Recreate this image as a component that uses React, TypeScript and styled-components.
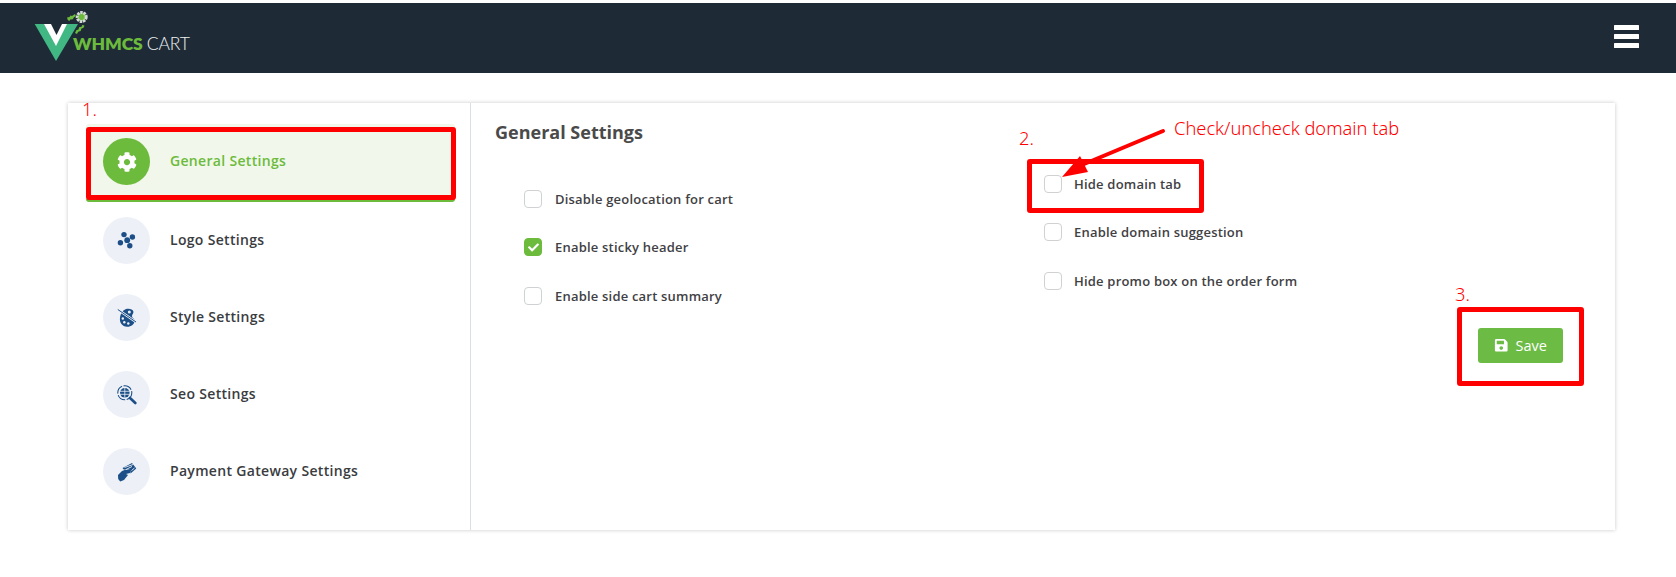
import React from "react";
import styled, { createGlobalStyle } from "styled-components";
import { FaCog, FaSave, FaCheck } from "react-icons/fa";

const Global = createGlobalStyle`
  html, body { margin: 0; padding: 0; background: #fff; }
  body { font-family: "Open Sans", "Liberation Sans", sans-serif; }
`;

const Page = styled.div`
  position: relative;
  width: 1676px;
  height: 577px;
  padding-top: 3px;
  box-sizing: border-box;
  overflow: hidden;
`;

const Header = styled.header`
  height: 70px;
  background: #1e2b37;
  display: flex;
  align-items: center;
  justify-content: space-between;
  padding: 0 37px 0 34px;
`;

const Brand = styled.div`
  display: flex;
  align-items: flex-end;
  height: 70px;
`;

const BrandMark = styled.svg`
  width: 62px;
  height: 60px;
  margin: 6px 0 0 0;
  align-self: flex-start;
  flex: none;
`;

const BrandText = styled.div`
  margin: 0 0 19px -23px;
  font-family: "Lato", sans-serif;
  font-size: 17.5px;
  line-height: 20px;
  white-space: nowrap;
  color: #eef1f2;
  font-weight: 300;
  letter-spacing: -0.1px;
`;

const BrandStrong = styled.span`
  color: #6cbb3c;
  font-weight: 800;
  margin-right: 4px;
`;

const Burger = styled.svg`
  width: 25px;
  height: 23px;
  display: block;
  margin-bottom: 3px;
`;

const Main = styled.main`
  padding: 30px 61px 0 68px;
`;

const Card = styled.section`
  display: flex;
  height: 427px;
  background: #fff;
  box-shadow: 0 0 4px rgba(0, 0, 0, 0.22);
`;

const Sidebar = styled.nav`
  flex: none;
  width: 403px;
  box-sizing: border-box;
  padding: 21px 15px 0 18px;
  border-right: 1px solid #dcdfe2;
`;

const NavItem = styled.div<{ $active?: boolean }>`
  display: flex;
  align-items: center;
  gap: 20px;
  height: ${(p) => (p.$active ? "78px" : "77px")};
  box-sizing: border-box;
  padding-left: 17px;
  background: ${(p) => (p.$active ? "#f1f7ea" : "transparent")};
  border-bottom: ${(p) => (p.$active ? "3px solid #6cbb3c" : "0")};
  border-radius: 3px;
  color: ${(p) => (p.$active ? "#6cbb3c" : "#3a3c40")};
  font-size: 14px;
  font-weight: 600;
  letter-spacing: 0.32px;
`;

const NavLabel = styled.span`
  position: relative;
  top: -1px;
`;

const NavIcon = styled.span<{ $active?: boolean }>`
  flex: none;
  width: 47px;
  height: 47px;
  border-radius: 50%;
  display: flex;
  align-items: center;
  justify-content: center;
  background: ${(p) => (p.$active ? "#6cbb3c" : "#edf1f7")};
  color: ${(p) => (p.$active ? "#fff" : "#1c4f87")};
  font-size: 20px;
`;

const Glyph = styled.svg`
  width: 20px;
  height: 20px;
  display: block;
`;

const Content = styled.div`
  flex: 1;
  display: flex;
  flex-direction: column;
  padding-left: 24px;
`;

const Columns = styled.div`
  display: grid;
  grid-template-columns: 520px 1fr;
  height: 225px;
`;

const Title = styled.h2`
  margin: 17px 0 0;
  font-size: 18px;
  line-height: 24px;
  font-weight: 700;
  color: #4a4a4a;
`;

const OptionRow = styled.label`
  display: flex;
  align-items: center;
  gap: 13px;
  height: 18px;
  margin-bottom: 30.3px;
  font-size: 13px;
  font-weight: 600;
  letter-spacing: 0.2px;
  color: #3f4144;
  white-space: nowrap;
`;

const LeftList = styled.div`
  margin: 46px 0 0 29px;
`;

const RightList = styled.div`
  margin: 72px 0 0 29px;
  ${OptionRow} {
    gap: 12px;
  }
`;

const Box = styled.span<{ $checked?: boolean }>`
  flex: none;
  width: 18px;
  height: 18px;
  box-sizing: border-box;
  border-radius: 4px;
  border: 1px solid ${(p) => (p.$checked ? "#6cbb3c" : "#cfd1d3")};
  background: ${(p) => (p.$checked ? "#6cbb3c" : "#fff")};
  color: #fff;
  font-size: 11px;
  display: flex;
  align-items: center;
  justify-content: center;
`;

const Footer = styled.div`
  display: flex;
  justify-content: flex-end;
  padding-right: 52px;
`;

const SaveButton = styled.button`
  display: flex;
  align-items: center;
  justify-content: center;
  gap: 7px;
  width: 85px;
  height: 35px;
  padding: 0 0 1px;
  border: 0;
  border-radius: 3px;
  background: #6cbb45;
  color: #fff;
  font-family: inherit;
  font-size: 14.5px;
  font-weight: 500;
`;

const RedBox = styled.div<{ $x: number; $y: number; $w: number; $h: number }>`
  position: absolute;
  left: ${(p) => p.$x}px;
  top: ${(p) => p.$y}px;
  width: ${(p) => p.$w}px;
  height: ${(p) => p.$h}px;
  box-sizing: border-box;
  border: 5px solid #ff0000;
  border-radius: 3px;
`;

const Note = styled.div<{ $x: number; $y: number }>`
  position: absolute;
  left: ${(p) => p.$x}px;
  top: ${(p) => p.$y}px;
  font-family: "Noto Sans", sans-serif;
  font-size: 18.3px;
  font-weight: 300;
  line-height: 22px;
  color: #ff0000;
  white-space: nowrap;
`;

const Arrow = styled.svg`
  position: absolute;
  left: 1055px;
  top: 120px;
  width: 120px;
  height: 70px;
`;

const LogoGlyph = () => (
  <Glyph viewBox="0 0 20 20" fill="currentColor">
    <circle cx="7" cy="3.6" r="2.7" />
    <circle cx="15.4" cy="6" r="2.7" />
    <circle cx="10.200" cy="9.200" r="2.900" />
    <circle cx="3.400" cy="11.800" r="2.700" />
    <circle cx="12.800" cy="14.800" r="2.700" />
  </Glyph>
);

const PaletteGlyph = () => (
  <Glyph viewBox="0 0 20 20">
    <path
      fill="currentColor"
      d="M8.500 1.200c3-1 7.200-.5 7.900 2.400.5 2-1.600 3-1.400 4.800.2 1.600 2.400 2 2.600 4 .3 3.500-3.600 6.400-7.600 6.300C6.200 18.600 2.800 15.600 2.900 11.200 3 7 5 2.500 8.500 1.200z"
    />
    <circle cx="12.300" cy="4" r="1.500" fill="#edf1f7" />
    <circle cx="5.800" cy="10.500" r="1.200" fill="#edf1f7" />
    <circle cx="7.300" cy="14.300" r="1.200" fill="#edf1f7" />
    <circle cx="11.300" cy="15.500" r="1.200" fill="#edf1f7" />
    <path d="M0.800 1.500 19 14" stroke="#edf1f7" strokeWidth="2.400" />
    <path d="M0.800 1.500 19 14" stroke="currentColor" strokeWidth="1" />
  </Glyph>
);

const SeoGlyph = () => (
  <Glyph viewBox="0 0 20 20" fill="none" stroke="currentColor">
    <circle cx="7.800" cy="7.800" r="7" strokeWidth="1.100" strokeDasharray="9 1.500" />
    <circle cx="7.800" cy="7.800" r="4.800" fill="currentColor" stroke="none" />
    <path d="M3 6.300h9.600M3 9.300h9.600M7.800 3v9.600" stroke="#edf1f7" strokeWidth="0.800" />
    <path d="M13 13l5.300 5" strokeWidth="2.600" strokeLinecap="round" />
  </Glyph>
);

const PaymentGlyph = () => (
  <Glyph viewBox="0 0 20 20">
    <path
      fill="currentColor"
      d="M1 13 5 9l4-1.500 4 .5v3l-4 1 2 1-4 5-3.800 1.500L1.200 17z"
    />
    <path fill="currentColor" d="M5.500 6 15 1l4.300 5.500-5.800 5L13 8l-4-1-2 .8z" />
    <path d="M7.500 5.500 16 2.500M14.500 8.500l3-2.500M9 7.500l6-3" stroke="#edf1f7" strokeWidth="0.900" />
  </Glyph>
);

const nav = [
  { label: "General Settings", icon: <FaCog />, active: true },
  { label: "Logo Settings", icon: <LogoGlyph /> },
  { label: "Style Settings", icon: <PaletteGlyph /> },
  { label: "Seo Settings", icon: <SeoGlyph /> },
  { label: "Payment Gateway Settings", icon: <PaymentGlyph /> },
];

const left = [
  { label: "Disable geolocation for cart" },
  { label: "Enable sticky header", checked: true },
  { label: "Enable side cart summary" },
];

const right = [
  { label: "Hide domain tab" },
  { label: "Enable domain suggestion" },
  { label: "Hide promo box on the order form" },
];

const Option = ({ label, checked }: { label: string; checked?: boolean }) => (
  <OptionRow>
    <Box $checked={checked}>{checked && <FaCheck />}</Box>
    {label}
  </OptionRow>
);

export default function App() {
  return (
    <Page>
      <Global />
      <Header>
        <Brand>
          <BrandMark viewBox="0 0 62 60">
            <path d="M0.700 15H44L22 52z" fill="#41b883" />
            <path d="M10 15h23L22 37z" fill="#fff" />
            <path d="M17 15h11l-5.500 11z" fill="#1e2b37" />
            <path
              d="M33 8.500l2.500-.5 1-1.500 1.500.5 3-2 .8 2-2 1.500-1 1.800-2.500.3-1 1.400-1.500-1zM41 24l1.500-3 2-.5.500-2.200 2.500-.5 1-2 2 1-1 2-2.300 1-.5 2.200-2.500.7-1.200 2.300z"
              fill="#6cbb3c"
            />
            <circle cx="47.700" cy="8" r="4.500" fill="#6cbb3c" stroke="#d5d8da" strokeWidth="3" strokeDasharray="2.400 .8" />
          </BrandMark>
          <BrandText>
            <BrandStrong>WHMCS</BrandStrong>CART
          </BrandText>
        </Brand>
        <Burger viewBox="0 0 25 23" fill="#fff">
          <rect x="0" y="0" width="25" height="5" rx="0.500" />
          <rect x="0" y="9" width="25" height="5" rx="0.500" />
          <rect x="0" y="18" width="25" height="5" rx="0.500" />
        </Burger>
      </Header>
      <Main>
        <Card>
          <Sidebar>
            {nav.map((item) => (
              <NavItem key={item.label} $active={item.active}>
                <NavIcon $active={item.active}>{item.icon}</NavIcon>
                <NavLabel>{item.label}</NavLabel>
              </NavItem>
            ))}
          </Sidebar>
          <Content>
            <Columns>
              <div>
                <Title>General Settings</Title>
                <LeftList>
                  {left.map((o) => (
                    <Option key={o.label} {...o} />
                  ))}
                </LeftList>
              </div>
              <RightList>
                {right.map((o) => (
                  <Option key={o.label} {...o} />
                ))}
              </RightList>
            </Columns>
            <Footer>
              <SaveButton>
                <FaSave />
                Save
              </SaveButton>
            </Footer>
          </Content>
        </Card>
      </Main>
      <RedBox $x={86} $y={127} $w={370} $h={73} />
      <RedBox $x={1027} $y={159} $w={177} $h={54} />
      <RedBox $x={1457} $y={307} $w={127} $h={79} />
      <Note $x={82} $y={98}>1.</Note>
      <Note $x={1019} $y={127}>2.</Note>
      <Note $x={1455} $y={283}>3.</Note>
      <Note $x={1174} $y={117}>Check/uncheck domain tab</Note>
      <Arrow viewBox="0 0 120 70">
        <path d="M108 11 22 47" stroke="#ff0000" strokeWidth="4" strokeLinecap="round" />
        <path d="M7 57 25 36 33 52z" fill="#ff0000" />
      </Arrow>
    </Page>
  );
}
